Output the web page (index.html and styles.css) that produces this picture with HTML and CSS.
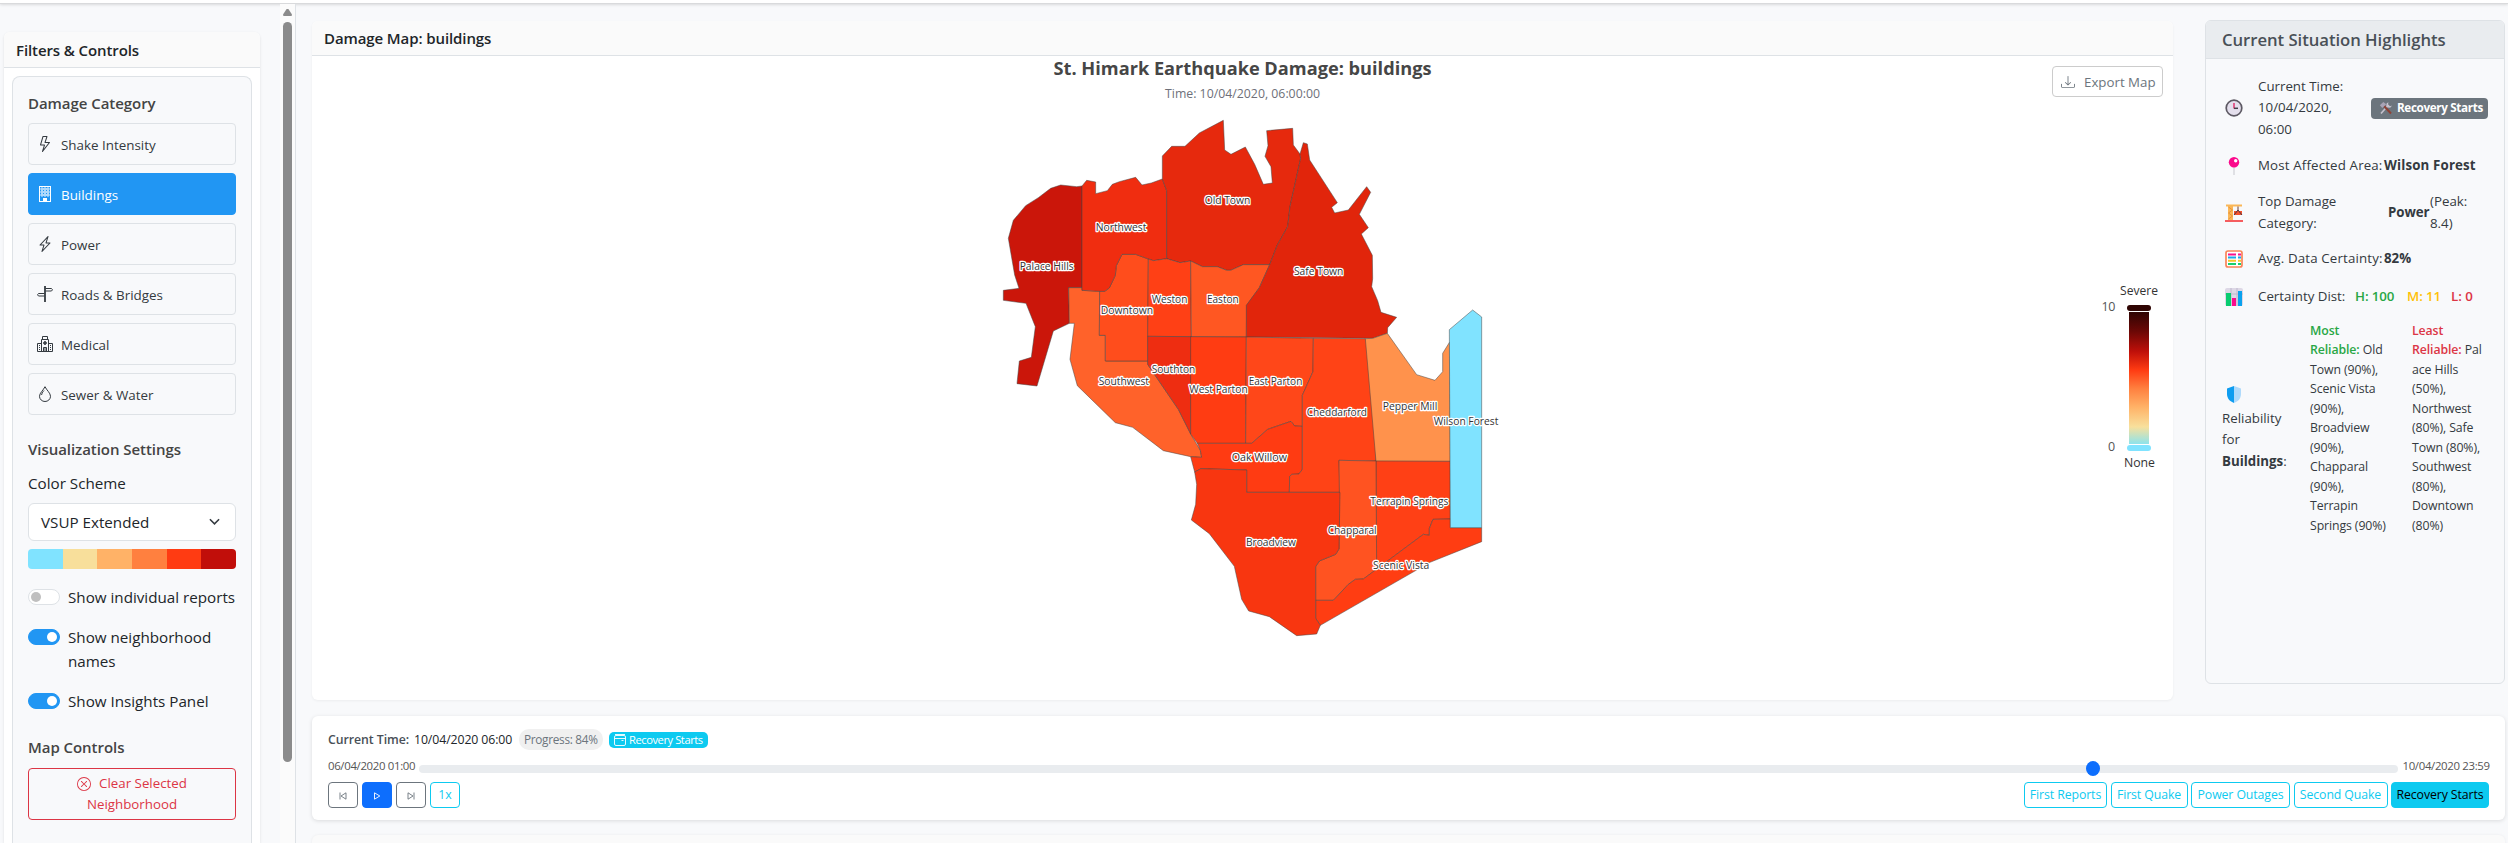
FILE: index.html
```html
<!DOCTYPE html>
<html lang="en">
<head>
<meta charset="utf-8">
<title>St. Himark Damage Dashboard</title>
<link rel="stylesheet" href="styles.css">
</head>
<body>
<div class="topbar"></div>
<div class="layout">
  <aside class="sidebar">
    <section class="filter-card">
      <h2 class="card-head">Filters &amp; Controls</h2>
      <div class="filter-body">
        <div class="filter-inner">
          <h3 class="group-title">Damage Category</h3>
          <nav class="categories">
            <button class="cat"><svg class="ico" viewBox="0 0 16 16"><path d="M5.52.359A.5.5 0 0 1 6 0h4a.5.5 0 0 1 .474.658L8.694 6H12.5a.5.5 0 0 1 .395.807l-7 9a.5.5 0 0 1-.873-.454L6.823 9.5H3.5a.5.5 0 0 1-.48-.641zM6.374 1 4.168 8.5H7.5a.5.5 0 0 1 .478.647L6.78 13.04 11.478 7H8a.5.5 0 0 1-.474-.658L9.306 1z"/></svg><span>Shake Intensity</span></button>
            <button class="cat cat-active"><svg class="ico" viewBox="0 0 16 16"><path fill-rule="evenodd" d="M2 0h12v16H2zM3 1v14h3v-3h4v3h3V1z"/><path d="M4 2h2v2H4zM7 2h2v2H7zM10 2h2v2h-2zM4 5h2v2H4zM7 5h2v2H7zM10 5h2v2h-2zM4 8h2v2H4zM7 8h2v2H7zM10 8h2v2h-2z" fill="none" stroke="currentColor" stroke-width=".8"/></svg><span>Buildings</span></button>
            <button class="cat"><svg class="ico" viewBox="0 0 16 16"><path d="M11.251.068a.5.5 0 0 1 .227.58L9.677 6.5H13a.5.5 0 0 1 .364.843l-8 8.5a.5.5 0 0 1-.842-.49L6.323 9.5H3a.5.5 0 0 1-.364-.843l8-8.5a.5.5 0 0 1 .615-.09zM4.157 8.5H7a.5.5 0 0 1 .478.647L6.11 13.59l5.732-6.09H9a.5.5 0 0 1-.478-.647L9.89 2.41z"/></svg><span>Power</span></button>
            <button class="cat"><svg class="ico line" viewBox="0 0 16 16"><path d="M8.500 2.500h6l1 1.250-1 1.250h-6M7.500 7.500h-6L.5 8.750 1.500 10h6"/><path d="M8 0v16" stroke-width="1.800"/></svg><span>Roads &amp; Bridges</span></button>
            <button class="cat"><svg class="ico line" viewBox="0 0 16 16"><path d="M4.5 15.5v-12h7v12M5.5 3.500v-3h5v3M4.5 7.500h-4v8h15v-8h-4M6.500 15.500v-4h3v4M8 11.500v4"/><path d="M8 5v4M6 7h4" stroke-width="1.600"/><path d="M2 9.500h1M2 11.500h1M2 13.500h1M13 9.500h1M13 11.500h1M13 13.500h1"/></svg><span>Medical</span></button>
            <button class="cat"><svg class="ico line" viewBox="0 0 16 16"><path d="M8 .7C6.500 4 2.500 7 2.500 10.300a5.500 5.200 0 0 0 11 0C13.500 7 9.500 4 8 .7zM7 4.500C5.500 6.200 4.700 7.600 4.600 9"/></svg><span>Sewer &amp; Water</span></button>
          </nav>
          <h3 class="group-title vis-title">Visualization Settings</h3>
          <div class="field-label">Color Scheme</div>
          <div class="select"><span>VSUP Extended</span><svg class="chev" viewBox="0 0 12 8"><path d="m1 1 5 5 5-5"/></svg></div>
          <div class="palette"><i class="p1"></i><i class="p2"></i><i class="p3"></i><i class="p4"></i><i class="p5"></i><i class="p6"></i></div>
          <div class="switches">
            <div class="switch-row"><span class="switch"></span><span class="sp-a">Show individual reports</span></div>
            <div class="switch-row"><span class="switch switch-on"></span><span>Show neighborhood<br>names</span></div>
            <div class="switch-row"><span class="switch switch-on"></span><span>Show Insights Panel</span></div>
          </div>
          <h3 class="group-title map-title">Map Controls</h3>
          <button class="clear-btn"><span><svg class="ico14" viewBox="0 0 16 16"><path d="M8 15A7 7 0 1 1 8 1a7 7 0 0 1 0 14m0 1A8 8 0 1 0 8 0a8 8 0 0 0 0 16"/><path d="M4.646 4.646a.5.5 0 0 1 .708 0L8 7.293l2.646-2.647a.5.5 0 0 1 .708.708L8.707 8l2.647 2.646a.5.5 0 0 1-.708.708L8 8.707l-2.646 2.647a.5.5 0 0 1-.708-.708L7.293 8 4.646 5.354a.5.5 0 0 1 0-.708"/></svg>Clear Selected</span><span>Neighborhood</span></button>
        </div>
      </div>
    </section>
    <div class="scroll"><div class="scroll-up"></div><div class="scroll-thumb"></div></div>
  </aside>

  <main class="main">
    <div class="upper">
      <section class="map-card">
        <h2 class="card-head map-head">Damage Map: buildings</h2>
        <div class="map-body">
          <svg class="map" viewBox="312 56 1861 643">
            <defs><linearGradient id="ramp" x1="0" y1="0" x2="0" y2="1"><stop offset="0" stop-color="#2f0503"/><stop offset=".15" stop-color="#6d0806"/><stop offset=".3" stop-color="#bf100a"/><stop offset=".44" stop-color="#ff3b12"/><stop offset=".58" stop-color="#ff803f"/><stop offset=".72" stop-color="#ffb267"/><stop offset=".87" stop-color="#f8e09c"/><stop offset="1" stop-color="#8de3ec"/></linearGradient></defs>
            <text class="m-title" x="1053.500" y="75" textLength="378" lengthAdjust="spacingAndGlyphs">St. Himark Earthquake Damage: buildings</text>
            <text class="m-sub" x="1165" y="98" textLength="155" lengthAdjust="spacingAndGlyphs">Time: 10/04/2020, 06:00:00</text>
            <g class="regions" transform="translate(980 40) scale(.333333)">
              <path fill="#cb160a" d="M306 438 290 440 242 435 212 445 175 473 137 497 100 541 85 595 104 705 117 745 70 751 70 781 138 790 166 860 154 952 118 963 111 1031 171 1038 220 873 268 850 266 743 306 743z"/>
              <path fill="#ff622a" d="M266 743 306 743 306 751 359 754 358 886 376 886 376 963 503 963 503 973 595 1108 632 1182 661 1231 665 1252 632 1250 550 1232 458 1162 406 1148 292 1037 270 958 283 850 268 850z"/>
              <path fill="#ff4d1c" d="M359 754 374 754 388 744 406 706 409 677 426 643 467 643 505 657 503 963 376 963 376 886 358 886z"/>
              <path fill="#f02d10" d="M306 438 320 421 347 426 347 461 382 452 397 433 418 425 467 412 486 435 514 429 547 417 560 452 560 656 520 662 505 657 467 643 426 643 409 677 406 706 388 744 374 754 359 754 306 751z"/>
              <path fill="#e6290d" d="M547 417 547 348 575 319 615 319 658 279 730 241 734 330 753 343 796 321 824 373 850 433 877 429 873 380 855 349 864 317 860 272 938 265 940 315 960 342 962 355 930 500 923 560 892 615 869 674 790 674 752 691 740 691 712 680 667 680 632 663 600 668 560 656 560 452z"/>
              <path fill="#ff4015" d="M505 657 520 662 560 656 600 668 632 663 634 890 503 889z"/>
              <path fill="#ff5722" d="M632 663 667 680 712 680 740 691 752 691 790 674 869 674 838 743 800 796 799 891 634 890z"/>
              <path fill="#e1250b" d="M960 342 970 308 982 312 989 360 1072 488 1055 502 1064 519 1105 510 1160 440 1172 457 1138 523 1165 563 1144 582 1177 646 1178 716 1175 740 1193 782 1203 817 1250 832 1223 863 1222 880 1178 895 799 891 799 796 838 743 869 674 892 615 923 560 930 500 962 355z"/>
              <path fill="#ee2d11" d="M503 889 634 890 632 1182 595 1108 503 973z"/>
              <path fill="#ff3c12" d="M632 890 799 891 797 1210 652 1210 632 1182z"/>
              <path fill="#ff4719" d="M799 891 1000 895 999 995 967 1066 967 1159 944 1158 933 1144 863 1168 815 1210 797 1210z"/>
              <path fill="#ff3b12" d="M652 1210 815 1210 863 1168 933 1144 944 1158 967 1159 967 1288 957 1302 935 1303 929 1310 928 1357 800 1357 800 1290 663 1286 644 1296 632 1250 665 1252 661 1231z"/>
              <path fill="#ff4316" d="M1000 895 1156 896 1186 946 1188 1263 1077 1261 1080 1357 928 1357 929 1310 935 1303 957 1302 967 1288 967 1066 999 995z"/>
              <path fill="#ff924c" d="M1156 896 1178 895 1222 880 1310 1004 1365 1021 1388 995 1388 940 1409 906 1411 1264 1188 1264z"/>
              <path fill="#ff4015" d="M1188 1263 1411 1264 1411 1437 1359 1438 1348 1466 1348 1486 1330 1483 1189 1588z"/>
              <path fill="#ff5321" d="M1077 1261 1188 1263 1190 1588 1150 1617 1126 1618 1105 1633 1060 1681 1007 1681 1007 1580 1018 1563 1067 1543 1077 1527 1078 1357z"/>
              <path fill="#ff3d12" d="M1411 1437 1359 1438 1348 1466 1348 1486 1330 1483 1150 1617 1126 1618 1105 1633 1060 1681 1007 1681 1007 1735 1021 1756 1350 1567 1505 1505 1505 1463 1411 1463z"/>
              <path fill="#f83610" d="M644 1296 663 1286 800 1290 800 1357 1080 1357 1077 1527 1067 1543 1018 1563 1007 1580 1007 1735 1021 1756 1010 1782 950 1787 868 1730 806 1713 785 1678 763 1579 688 1481 634 1440 647 1393 650 1333z"/>
              <path fill="#80e3ff" d="M1408 869 1478 810 1505 831 1505 1463 1411 1463z"/>
            </g>
            <g class="names" transform="translate(980 40) scale(.333333)">
              <text x="119" y="691" textLength="162" lengthAdjust="spacingAndGlyphs">Palace Hills</text>
              <text x="347" y="574" textLength="152" lengthAdjust="spacingAndGlyphs">Northwest</text>
              <text x="674" y="491" textLength="137" lengthAdjust="spacingAndGlyphs">Old Town</text>
              <text x="362" y="823" textLength="157" lengthAdjust="spacingAndGlyphs">Downtown</text>
              <text x="515" y="788" textLength="107" lengthAdjust="spacingAndGlyphs">Weston</text>
              <text x="681" y="788" textLength="95" lengthAdjust="spacingAndGlyphs">Easton</text>
              <text x="942" y="704" textLength="148" lengthAdjust="spacingAndGlyphs">Safe Town</text>
              <text x="515" y="1000" textLength="131" lengthAdjust="spacingAndGlyphs">Southton</text>
              <text x="356" y="1036" textLength="151" lengthAdjust="spacingAndGlyphs">Southwest</text>
              <text x="628" y="1060" textLength="175" lengthAdjust="spacingAndGlyphs">West Parton</text>
              <text x="806" y="1036" textLength="161" lengthAdjust="spacingAndGlyphs">East Parton</text>
              <text x="980" y="1129" textLength="181" lengthAdjust="spacingAndGlyphs">Cheddarford</text>
              <text x="1208" y="1111" textLength="164" lengthAdjust="spacingAndGlyphs">Pepper Mill</text>
              <text x="1361" y="1156" textLength="194" lengthAdjust="spacingAndGlyphs">Wilson Forest</text>
              <text x="755" y="1264" textLength="166" lengthAdjust="spacingAndGlyphs">Oak Willow</text>
              <text x="1171" y="1396" textLength="234" lengthAdjust="spacingAndGlyphs">Terrapin Springs</text>
              <text x="798" y="1519" textLength="150" lengthAdjust="spacingAndGlyphs">Broadview</text>
              <text x="1043" y="1483" textLength="147" lengthAdjust="spacingAndGlyphs">Chapparal</text>
              <text x="1179" y="1588" textLength="169" lengthAdjust="spacingAndGlyphs">Scenic Vista</text>
            </g>
            <g class="legend">
              <text x="2120" y="295" textLength="38" lengthAdjust="spacingAndGlyphs">Severe</text>
              <text x="2101.500" y="311" textLength="14" class="tick">10</text>
              <text x="2108" y="451" textLength="7" class="tick">0</text>
              <text x="2124" y="467" textLength="31" lengthAdjust="spacingAndGlyphs">None</text>
              <rect x="2129" y="312" width="20" height="132" fill="url(#ramp)"/>
              <rect x="2127" y="305" width="24" height="6" rx="3" fill="#2f0503"/>
              <rect x="2127" y="445" width="24" height="6" rx="3" fill="#80e3ff"/>
            </g>
          </svg>
          <button class="export"><svg class="ico14" viewBox="0 0 16 16"><path d="M.5 9.900a.5.5 0 0 1 .5.5v2.500a1 1 0 0 0 1 1h12a1 1 0 0 0 1-1v-2.500a.5.5 0 0 1 1 0v2.500a2 2 0 0 1-2 2H2a2 2 0 0 1-2-2v-2.500a.5.5 0 0 1 .5-.5"/><path d="M7.646 11.854a.5.5 0 0 0 .708 0l3-3a.5.5 0 0 0-.708-.708L8.500 10.293V1.500a.5.5 0 0 0-1 0v8.793L5.354 8.146a.5.5 0 1 0-.708.708z"/></svg><span>Export Map</span></button>
        </div>
      </section>

      <aside class="insights">
        <h2 class="ins-head">Current Situation Highlights</h2>
        <div class="ins-body">
          <div class="ins-row r-time">
            <svg class="emo" viewBox="0 0 18 18"><circle cx="9" cy="9" r="7.800" fill="#e4dfec" stroke="#5d5963" stroke-width="1.700"/><path d="M9 4v5.500" stroke="#e0356f" stroke-width="1.500"/><path d="M9 9.300h4" stroke="#44404a" stroke-width="1.500"/></svg>
            <span class="ins-text">Current Time:<br>10/04/2020,<br>06:00</span>
            <span class="badge-gray"><svg viewBox="0 0 14 14"><path d="m2 12.500 7-8" stroke="#c6c2ce" stroke-width="1.700"/><path d="M9.500 1.200a2.800 2.800 0 1 0 3.300 3.300L11 5.200 9 3.300z" fill="#c6c2ce"/><path d="m5 5 7 7.500" stroke="#8e4135" stroke-width="2"/><path d="m.8 4.300 3.500-3.200 3 2.200-4 3.800z" fill="#a9a3b5"/></svg><b>Recovery Starts</b></span>
          </div>
          <div class="ins-row r-area">
            <svg class="emo" viewBox="0 0 18 18"><path d="M9 9v9" stroke="#cfcfd6" stroke-width="1.200"/><circle cx="9" cy="5.300" r="5.200" fill="#fb0a8c"/><circle cx="10.700" cy="3.700" r="1.700" fill="#fff"/></svg>
            <span class="ins-text lead">Most Affected Area:</span><b class="area-name">Wilson Forest</b>
          </div>
          <div class="ins-row r-cat">
            <svg class="emo" viewBox="0 0 18 18"><path d="M3 1h5v15H3z" fill="#fbb757"/><path d="m3.500 3 4 3-4 3 4 3-4 3" stroke="#e9953b" fill="none"/><path d="M1 .5h16v2H1z" fill="#fbb757"/><path d="M13 2.500v4" stroke="#6a3a32"/><path d="M9 7h8v4H9z" fill="#f4512c"/><path d="m9 11 4-5 4 5" stroke="#4a3a44" fill="none"/><path d="M0 16h18v2H0z" fill="#f55d5f"/></svg>
            <span class="ins-text two">Top Damage<br>Category:</span><b class="power">Power</b><span class="ins-text">(Peak:<br>8.4)</span>
          </div>
          <div class="ins-row r-cert">
            <svg class="emo" viewBox="0 0 18 18"><rect x="1" y="1" width="16" height="16" rx="2" fill="#fff" stroke="#f98558" stroke-width="1.700"/><path d="M3 4.500h8M13 4.500h3" stroke="#f9128d" stroke-width="2"/><path d="M3 7.500h8M13 7.500h3" stroke="#19a8ec" stroke-width="2"/><path d="M3 10.700h8M13 10.700h3" stroke="#f6c52b" stroke-width="2"/><path d="M3 14h8M13 14h3" stroke="#17cf72" stroke-width="2"/></svg>
            <span class="ins-text lead">Avg. Data Certainty:</span><b>82%</b>
          </div>
          <div class="ins-row r-dist">
            <svg class="emo" viewBox="0 0 18 18"><rect width="18" height="18" rx="2" fill="#ddd8e6"/><path d="M0 6h18M6 0v18M12 0v18" stroke="#b9b2c6" stroke-width=".8"/><path d="M1 5h5v13H1z" fill="#09cc70"/><path d="M7 10h4v8H7z" fill="#fb0a8c"/><path d="M13 3h4v15h-4z" fill="#0aa2ee"/></svg>
            <span class="ins-text dist">Certainty Dist:</span><span class="d-h">H: 100</span><span class="d-m">M: 11</span><span class="d-l">L: 0</span>
          </div>
          <div class="rel">
            <div class="rel-label"><svg class="shield" viewBox="0 0 14 17"><path d="M7 0 0 2.500V8c0 4.500 3 7.500 7 9z" fill="#0f9df0"/><path d="m7 0 7 2.500V8c0 4.500-3 7.500-7 9z" fill="#afdafb"/></svg><span>Reliability<br>for<br><b>Buildings</b>:</span></div>
            <div class="rel-col"><em class="green">Most<br>Reliable:</em> Old<br>Town (90%),<br>Scenic Vista<br>(90%),<br>Broadview<br>(90%),<br>Chapparal<br>(90%),<br>Terrapin<br>Springs (90%)</div>
            <div class="rel-col"><em class="red">Least<br>Reliable:</em> Pal<br>ace Hills<br>(50%),<br>Northwest<br>(80%), Safe<br>Town (80%),<br>Southwest<br>(80%),<br>Downtown<br>(80%)</div>
          </div>
        </div>
      </aside>
    </div>

    <section class="timeline">
      <div class="tl-info"><b class="tl-label">Current Time:</b><span class="tl-date">10/04/2020 06:00</span><span class="pill">Progress: 84%</span><span class="badge-cyan"><svg viewBox="0 0 12 12"><rect x=".5" y="1.500" width="11" height="10" rx="1.500"/><path d="M1 .5h10M.5 4.500h11M7.500 6.500h2"/></svg><span>Recovery Starts</span></span></div>
      <div class="tl-slider"><span class="tl-end">06/04/2020 01:00</span><div class="track"><i class="thumb"></i></div><span class="tl-end">10/04/2020 23:59</span></div>
      <div class="tl-actions">
        <button class="step"><svg viewBox="0 0 8 8"><path d="M1 .5v7M7 .8v6.400L2 4z"/></svg></button>
        <button class="step step-play"><svg viewBox="0 0 8 8"><path d="M1.500.8v6.400L6.800 4z"/></svg></button>
        <button class="step"><svg viewBox="0 0 8 8"><path d="M7 .5v7M1 .8v6.400L6 4z"/></svg></button>
        <button class="step step-speed">1x</button>
        <div class="events"><button class="ev e1">First Reports</button><button class="ev e2">First Quake</button><button class="ev e3">Power Outages</button><button class="ev e4">Second Quake</button><button class="ev e5">Recovery Starts</button></div>
      </div>
    </section>
    <div class="next-card"></div>
  </main>
</div>
</body>
</html>
```

FILE: styles.css
```css
* { box-sizing: border-box; margin: 0; padding: 0; }
body { width: 2508px; height: 843px; overflow: hidden; background: #f8f9fb; color: #212529; font: 15.2px/24px "Open Sans", "Noto Sans", sans-serif; }
button { font: inherit; background: none; white-space: nowrap; }
svg { display: block; flex: none; }

.topbar { height: 4px; background: #fff; border-bottom: 1px solid #d9dadc; box-shadow: 0 1px 3px rgba(0,0,0,.12); }
.layout { display: flex; height: 839px; }

/* Sidebar */
.sidebar { width: 296px; display: flex; justify-content: space-between; border-right: 1px solid #dee2e6; padding-left: 4px; }
.filter-card { width: 256px; margin-top: 28px; background: #fff; border-radius: 6px 6px 0 0; box-shadow: 0 1px 3px rgba(0,0,0,.1); }
.card-head { height: 36px; padding: 1px 12px 0; background: #fafafa; border-bottom: 1px solid #dee2e6; border-radius: 6px 6px 0 0; font-size: 15px; line-height: 34px; font-weight: 600; letter-spacing: -.1px; }
.filter-body { padding: 8px 8px 0; }
.filter-inner { height: 767px; padding: 14px 15px 0; border: 1px solid #dee2e6; border-bottom: 0; border-radius: 8px 8px 0 0; background: #f8f9fb; }
.group-title { font-size: 15px; line-height: 24px; font-weight: 600; color: #444; letter-spacing: -.05px; }
.categories { display: grid; gap: 8px; margin-top: 8px; }
.cat { display: flex; align-items: center; gap: 8px; height: 42px; padding: 2px 8px 0; border: 1px solid #dee2e6; border-radius: 4px; color: #343a40; font-size: 13.400px; }
.cat-active { background: #2196f3; border-color: #2196f3; color: #fff; font-weight: 500; }
.ico { width: 16px; height: 16px; fill: currentColor; margin-top: -2px; }
.line { fill: none; stroke: currentColor; stroke-width: 1; }
.vis-title { margin-top: 22px; }
.field-label { margin-top: 10px; }
.select { display: flex; justify-content: space-between; align-items: center; height: 38px; margin-top: 8px; padding: 0 15px 0 12px; background: #fff; border: 1px solid #dee2e6; border-radius: 6px; }
.chev { width: 11px; height: 8px; fill: none; stroke: #343a40; stroke-width: 1.700; }
.palette { display: grid; grid-template-columns: repeat(6, 1fr); height: 20px; margin-top: 8px; border-radius: 4px; overflow: hidden; }
.p1 { background: #80e3ff; } .p2 { background: #f8df9b; } .p3 { background: #ffb267; } .p4 { background: #ff803f; } .p5 { background: #ff3b12; } .p6 { background: #c10e0a; }
.switches { display: grid; gap: 16px; margin-top: 16px; }
.switch-row { display: flex; gap: 8px; white-space: nowrap; }
.switch { position: relative; flex: none; width: 32px; height: 16px; margin-top: 4px; border: 1px solid #dee2e6; border-radius: 8px; background: #fff; }
.switch::after { content: ""; position: absolute; left: 2px; top: 2px; width: 10px; height: 10px; border-radius: 50%; background: #bfbfbf; }
.switch-on { background: #2196f3; border-color: #2196f3; }
.switch-on::after { left: 18px; background: #fff; }
.map-title { margin-top: 22px; }
.clear-btn { display: flex; flex-direction: column; align-items: center; justify-content: center; width: 208px; height: 52px; margin-top: 9px; border: 1px solid #dc3545; border-radius: 4px; color: #dc3545; font-size: 13.3px; line-height: 21px; }
.clear-btn span { display: flex; align-items: center; gap: 8px; }
.ico14 { width: 14px; height: 14px; fill: currentColor; }
.scroll { display: flex; flex-direction: column; align-items: center; width: 15px; padding-top: 5px; background: #fbfbfb; }
.scroll-up { width: 9px; height: 7px; background: #8b8b8b; clip-path: polygon(40% 0, 60% 0, 100% 80%, 95% 100%, 5% 100%, 0 80%); }
.scroll-thumb { width: 9px; height: 740px; margin-top: 6px; border-radius: 5px; background: #8b8b8b; }

/* Main area */
.main { width: 2212px; padding: 16px 3px 0 16px; }
.upper { display: flex; justify-content: space-between; height: 680px; }
.map-card { width: 1861px; height: 679px; margin-top: 1px; background: #fff; border-radius: 6px; box-shadow: 0 1px 3px rgba(0,0,0,.05); }
.map-head { height: 35px; padding-top: 0; }
.map-body { position: relative; height: 644px; }
.map { width: 1861px; height: 643px; }
.m-title { font-size: 17.500px; font-weight: 700; fill: #464646; }
.m-sub { font-size: 12.300px; fill: #6e7079; }
.regions path { stroke: #444; stroke-opacity: .5; stroke-width: 3; stroke-linejoin: round; }
.names text { font-size: 33px; fill: #333; stroke: #fff; stroke-width: 8; stroke-linejoin: round; paint-order: stroke; }
.legend text { font-size: 12px; fill: #333; }
.legend .tick { font-size: 12.500px; fill: #555; }
.export { position: absolute; right: 10px; top: 10px; display: flex; align-items: center; gap: 9px; width: 111px; height: 31px; padding: 0 8px 0; border: 1px solid #ccc; border-radius: 4px; background: #fff; color: #6c757d; font-size: 13.300px; }

/* Insights panel */
.insights { width: 300px; height: 664px; border: 1px solid #dee2e6; border-radius: 6px; background: #f8f9fb; white-space: nowrap; }
.ins-head { height: 38px; padding: 0 16px; background: #e9ecef; border-bottom: 1px solid #dee2e6; border-radius: 5px 5px 0 0; color: #495057; font-size: 16.700px; line-height: 38px; font-weight: 600; letter-spacing: -.04px; }
.ins-body { padding: 16px 16px 0; color: #343a40; font-size: 13.300px; line-height: 21.300px; }
.ins-row { display: flex; align-items: center; }
.emo { width: 18px; height: 18px; margin: 0 15px 0 3px; }
.r-time { height: 66px; }
.badge-gray { display: flex; align-items: center; gap: 4px; width: 117px; height: 21px; margin-left: auto; padding: 0 8px; border-radius: 4px; background: #6c757d; color: #fff; font-size: 11.700px; letter-spacing: -.35px; }
.badge-gray svg { width: 14px; height: 14px; fill: none; }
.r-area { height: 48px; padding-top: 2px; }
.lead { width: 126px; letter-spacing: .15px; }
.area-name { letter-spacing: .15px; }
.r-cat { height: 48px; padding-bottom: 1px; }
.two { width: 130px; }
.power { width: 42px; letter-spacing: -.1px; }
.r-cert { height: 42px; padding-top: 2px; }
.r-dist { height: 34px; padding-top: 2px; }
.dist { width: 89px; }
.r-dist span + span { font-weight: 600; }
.d-h { width: 40px; margin-left: 8px; color: #28a745; letter-spacing: -.1px; }
.d-m { width: 32px; margin-left: 12px; color: #ffc107; letter-spacing: -.1px; }
.d-l { margin-left: 12px; color: #dc3545; }
.rel { display: grid; grid-template-columns: 88px 102px 1fr; margin-top: 8px; }
.rel-label { align-self: start; padding-top: 65px; }
.shield { width: 14px; height: 17px; margin: 0 0 5px 5px; }
.rel-col { font-size: 12.300px; line-height: 19.450px; letter-spacing: -.1px; }
.rel-col em { font-style: normal; font-weight: 600; }
.green { color: #28a745; } .red { color: #dc3545; }

/* Timeline */
.timeline { width: 2193px; height: 104px; margin-top: 16px; padding: 13px 16px 0; border-radius: 6px; background: #fff; box-shadow: 0 1px 4px rgba(0,0,0,.12); white-space: nowrap; }
.tl-info { display: flex; align-items: center; height: 21px; font-size: 12.300px; }
.tl-label { width: 86px; color: #495057; font-weight: 600; letter-spacing: -.05px; }
.tl-date { width: 105px; letter-spacing: -.1px; }
.pill { width: 84px; height: 21px; padding-left: 5px; border-radius: 10px; background: #f0f0f0; color: #6c757d; font-size: 11.800px; line-height: 21px; letter-spacing: -.3px; }
.badge-cyan { display: flex; align-items: center; gap: 3px; width: 99px; height: 16px; margin-left: 6px; padding: 0 5px; border-radius: 5px; background: #0dcaf0; color: #fff; font-size: 11.200px; letter-spacing: -.45px; }
.badge-cyan svg { width: 12px; height: 12px; fill: none; stroke: #fff; stroke-width: .9; }
.tl-slider { display: flex; align-items: center; height: 20px; margin-top: 6px; color: #555; font-size: 11.400px; letter-spacing: -.33px; }
.tl-end { width: 86.500px; }
.track { position: relative; flex: 1; height: 8px; margin: 5px 5px 0 4.500px; border-radius: 4px; background: #e9ecef; }
.thumb { position: absolute; left: 84.240%; top: -4px; width: 14px; height: 15px; border-radius: 50%; background: #0d6efd; }
.tl-actions { display: flex; gap: 4px; margin-top: 6px; }
.step { display: grid; place-items: center; width: 30px; height: 26px; border: 1px solid #6c757d; border-radius: 4px; color: #6c757d; font-size: 12.300px; line-height: 24px; }
.step svg { width: 8px; height: 8px; margin-top: 2px; fill: none; stroke: currentColor; stroke-width: .9; }
.step-play { background: #0d6efd; border-color: #0d6efd; color: #fff; }
.step-speed { border-color: #0dcaf0; color: #0dcaf0; }
.events { display: flex; justify-content: space-between; width: 465px; margin-left: auto; }
.ev { height: 26px; border: 1px solid #0dcaf0; border-radius: 4px; color: #0dcaf0; font-size: 12.300px; line-height: 24px; letter-spacing: -.1px; }
.e1 { width: 83px; } .e2 { width: 77px; } .e3 { width: 99px; } .e4 { width: 94px; } .e5 { width: 98px; background: #0dcaf0; color: #000; }
.next-card { width: 2193px; height: 20px; margin-top: 15px; border-radius: 6px; background: #fafafa; box-shadow: 0 0 3px rgba(0,0,0,.06); }
```
